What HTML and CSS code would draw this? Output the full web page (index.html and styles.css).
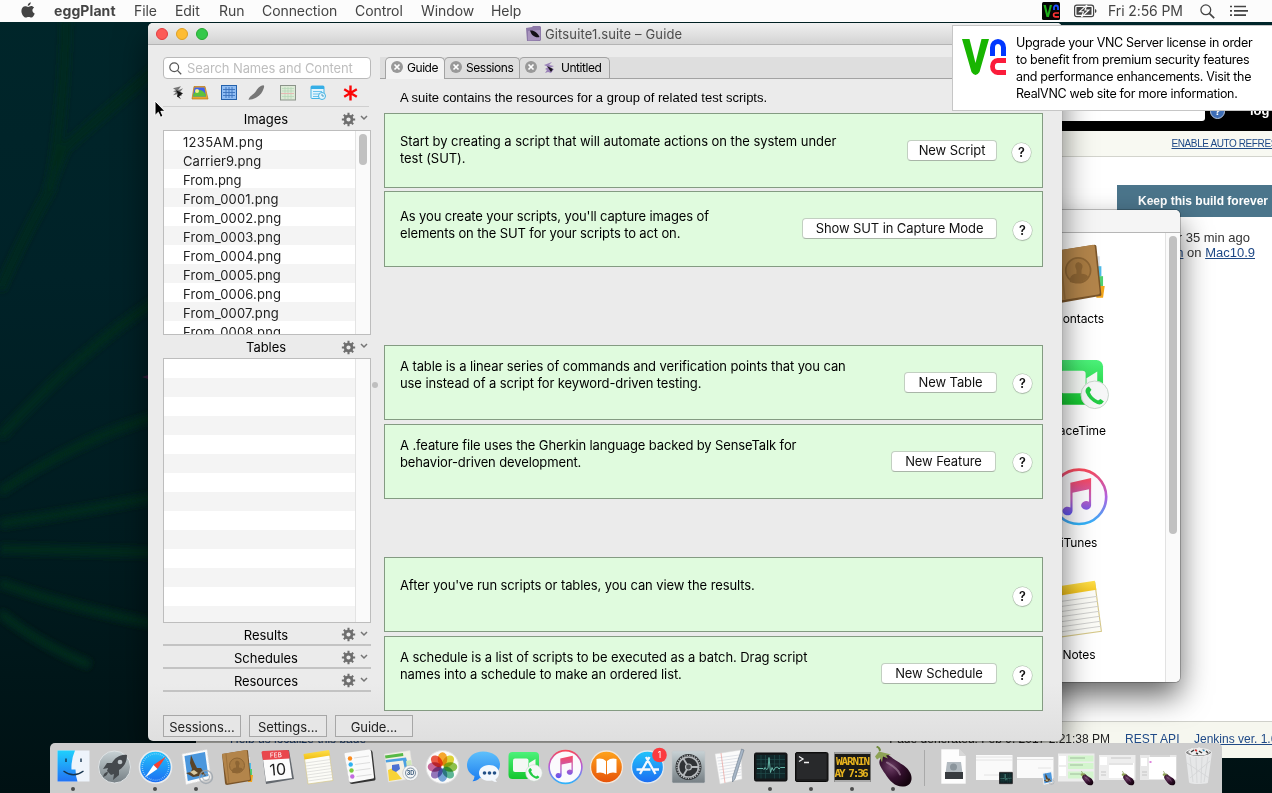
FILE: index.html
```html
<!DOCTYPE html>
<html lang="en">
<head>
<meta charset="utf-8">
<title>Gitsuite1.suite – Guide</title>
<link rel="stylesheet" href="styles.css">
</head>
<body>
<svg class="defs" aria-hidden="true">
  <defs>
    <linearGradient id="gBlue" x1="0" y1="0" x2="0" y2="1"><stop offset="0" stop-color="#5ec0fb"/><stop offset="1" stop-color="#1c7df0"/></linearGradient>
    <linearGradient id="gSky" x1="0" y1="0" x2="0" y2="1"><stop offset="0" stop-color="#22c5fb"/><stop offset="1" stop-color="#1c6cf2"/></linearGradient>
    <linearGradient id="gFinder" x1="0" y1="0" x2="0" y2="1"><stop offset="0" stop-color="#1fd0fd"/><stop offset="1" stop-color="#2272f4"/></linearGradient>
    <linearGradient id="gSilver" x1="0" y1="0" x2="0" y2="1"><stop offset="0" stop-color="#c8d2d5"/><stop offset="1" stop-color="#767f84"/></linearGradient>
    <linearGradient id="gGreen" x1="0" y1="0" x2="0" y2="1"><stop offset="0" stop-color="#4cf27a"/><stop offset="1" stop-color="#14c62e"/></linearGradient>
    <linearGradient id="gOrange" x1="0" y1="0" x2="0" y2="1"><stop offset="0" stop-color="#ffa41c"/><stop offset="1" stop-color="#e6520a"/></linearGradient>
    <linearGradient id="gRing" x1="0" y1="0" x2="0" y2="1"><stop offset="0" stop-color="#f84a5c"/><stop offset=".5" stop-color="#b060e0"/><stop offset="1" stop-color="#30b4fa"/></linearGradient>
    <linearGradient id="gNote" x1="0" y1="0" x2="0" y2="1"><stop offset="0" stop-color="#f9485e"/><stop offset=".55" stop-color="#c05fc0"/><stop offset="1" stop-color="#5a55f4"/></linearGradient>
    <linearGradient id="gYellow" x1="0" y1="0" x2="0" y2="1"><stop offset="0" stop-color="#ffe04a"/><stop offset="1" stop-color="#f0bd12"/></linearGradient>
    <radialGradient id="gEgg" cx=".35" cy=".4" r=".7"><stop offset="0" stop-color="#6d3f66"/><stop offset=".5" stop-color="#35102f"/><stop offset="1" stop-color="#16040f"/></radialGradient>
  </defs>
  <symbol id="gear" viewBox="0 0 16 16">
    <circle cx="8" cy="8" r="3.700" fill="none" stroke="#6e6e6e" stroke-width="2.900"/>
    <g stroke="#6e6e6e" stroke-width="2.200"><path d="M8 .9V3.500M8 12.500V15.100M.9 8H3.500M12.500 8H15.100M3 3l1.800 1.800M11.200 11.200L13 13M13 3l-1.800 1.800M4.800 11.200L3 13"/></g>
  </symbol>
  <symbol id="chev" viewBox="0 0 8 6"><path d="M1 1l3 3 3-3" fill="none" stroke="#757575" stroke-width="1.500"/></symbol>
  <symbol id="close" viewBox="0 0 12 12"><circle cx="6" cy="6" r="6" fill="#999"/><path d="M3.500 3.500l5 5M8.500 3.500l-5 5" stroke="#fff" stroke-width="1.700"/></symbol>
  <symbol id="egg" viewBox="0 0 41 50">
    <path d="M6 6c0-4-3-4-3-4l1-1.500c2 0 4 2.500 4 4.500z" fill="#6f8a3a"/>
    <path d="M7 14C5 18 8 22 12 28c5 8 11 14 19 13 8-1 9-9 6-14-3-6-8-8-14-12C18 12 13 6 10 9z" fill="url(#gEgg)"/>
    <path d="M2 11l4-5 4 1 8 2-5 1 2 3-5-2-1 6-2-5-3 2z" fill="#8ea355"/>
    <path d="M14 17c5 3 11 6 13 12" stroke="#a88aa2" stroke-width="2" fill="none" opacity=".65" stroke-linecap="round"/>
  </symbol>
  <symbol id="contacts" viewBox="0 0 41 50">
    <path d="M29 14h4v8h-4z" fill="#d9dde2"/><path d="M30 20h4v6h-4z" fill="#4ebbe9"/><path d="M30 26h5v7h-5z" fill="#4ed070"/><path d="M30 32h6l-1 7h-4z" fill="#f2a51a"/>
    <path d="M5 11L30 7q1 0 1 1l3 29q0 1-1 1L10 42q-2 0-2-2z" fill="#7a552a"/>
    <path d="M5 11L29 7q1 0 1 1l3 28q0 1-1 1L10 40.500z" fill="#b3854b"/>
    <circle cx="20" cy="22.500" r="7.500" fill="#a87b42" stroke="#8d6534"/><path d="M15 27.500q1-3 4-3v-2q-2-4 1-5 4 1 2 5v2q3 0 4 2-5 5-11 3z" fill="#8d6534"/><path d="M9 11l3 29" stroke="#9d723c"/>
  </symbol>
  <symbol id="facetime" viewBox="0 0 41 50">
    <rect x="4.500" y="9" width="30.500" height="27" rx="4" fill="url(#gGreen)"/><rect x="9" y="15.500" width="15.500" height="13.500" rx="2" fill="#f4f8f4"/><path d="M25 20l6.500-4v12l-6.500-4z" fill="#f4f8f4"/>
    <circle cx="30" cy="30" r="8.300" fill="#f6f7f7" stroke="#c9d6cc" stroke-width=".6"/><path d="M26.500 25l1.500 2-1 1.500q1.500 3.500 5 5l1.500-1 2 1.500q-1.500 2.500-4 1.500-5-2-7-7-.5-2.500 2-3.500z" fill="#22cc44"/>
  </symbol>
  <symbol id="itunes" viewBox="0 0 41 50">
    <circle cx="20.500" cy="24" r="16.400" fill="#fbfafd" stroke="url(#gRing)" stroke-width="1.600"/>
    <path d="M15.300 15.500l12.500-2.800v16.500a3 2.600 0 1 1-1.300-2.200v-7.600l-9.900 2.200v11a3 2.600 0 1 1-1.300-2.200z" fill="url(#gNote)"/>
  </symbol>
  <symbol id="notes" viewBox="0 0 41 50">
    <path d="M5 12l25-4 4 29.500L9 41z" fill="#fcfcf7" stroke="#d7c98a" stroke-width=".7"/><path d="M4.500 11L30 7l1 5.500-25.500 4z" fill="url(#gYellow)"/>
    <path d="M6.300 20l25-3.500M6.800 23l25-3.500M7.200 26l25-3.500M7.600 29l25-3.500M8 32l25-3.500M8.400 35l25-3.500M8.800 38l25-3.500" stroke="#d0d0ce" stroke-width=".6"/>
  </symbol>
  <symbol id="mail" viewBox="0 0 41 50">
    <path d="M6 11l25-4.500 4 29-25 6z" fill="#fbfbfb" stroke="#ddd" stroke-width=".8" stroke-dasharray="1.500 1"/><path d="M8.500 13l20.500-4 3.300 24-20.500 5z" fill="#4b97dd"/>
    <path d="M15 12l3 7 3 6 4 0 5 8-5-2-2 2-6 1-7-4 5-1 1-3-2-6z" fill="#5a4326"/><path d="M14 29l4-2 4 3-4 2z" fill="#d9c9a0"/><circle cx="30" cy="34" r="6.500" fill="none" stroke="#9aa3ab" stroke-width="1.400" opacity=".8"/><circle cx="30" cy="34" r="3.500" fill="none" stroke="#9aa3ab" opacity=".8"/>
  </symbol>
  <symbol id="monitor" viewBox="0 0 41 50">
    <rect x="4.500" y="10" width="32.500" height="28" rx="1.500" fill="#16191b" stroke="#0c0d0e"/><rect x="6.500" y="12" width="28.500" height="23.500" fill="#10272a"/>
    <path d="M6.500 16.500H35M6.500 21H35M6.500 30.500H35M11 12v23.500M15.500 12v23.500M24.500 12v23.500M29.500 12v23.500" stroke="#24514f" stroke-width=".6"/>
    <path d="M7 25.500h6l1 1 1-2 1.500 2 1.500-1 1-11 1.500 15 1.500-5 1.500 3 2-3 2-.5 1.500 2 1.500-1.500H35" fill="none" stroke="#6fc2b2" stroke-width=".9"/>
  </symbol>
</svg>

<div class="desktop">
  <svg class="leaf" viewBox="0 0 200 793" aria-hidden="true">
    <defs><filter id="soft"><feGaussianBlur stdDeviation="3"/></filter></defs>
    <g fill="none" stroke="#042c1d" stroke-width="9" filter="url(#soft)">
      <path d="M66 20Q64 110 50 190Q24 235 0 290" opacity=".8"/><path d="M160 65L65 148L48 190" opacity=".8"/>
      <path d="M160 298Q80 350 0 437"/><path d="M160 415Q80 438 0 492"/><path d="M160 496Q80 512 0 524"/><path d="M160 553L0 549"/><path d="M160 625Q70 608 0 583"/><path d="M90 665Q40 645 0 613"/>
    </g>
    <path d="M142 377l6-2v4z" fill="#4a1a46" opacity=".7"/>
  </svg>

  <section class="jenkins">
    <div class="jk-head"><span class="jk-search"></span><span class="jk-help">?</span><b class="jk-log">log in</b></div>
    <div class="jk-refresh"><a>ENABLE AUTO REFRESH</a></div>
    <div class="jk-body">
      <div class="jk-keep">Keep this build forever</div>
      <div class="jk-info"><div class="jk-when">Started 1 hr 35 min ago</div><div>Took <a>2 min</a> on <a>Mac10.9</a></div></div>
    </div>
    <div class="jk-foot"><a class="jk-loc">Help us localize this page</a><span class="jk-gen">Page generated: Feb 9, 2017 2:21:38 PM</span><a class="jk-rest">REST API</a><a class="jk-ver">Jenkins ver. 1.643</a></div>
  </section>

  <section class="apps">
    <div class="apps-title"></div>
    <div class="apps-body">
      <div class="apps-list">
        <figure><svg viewBox="0 0 41 50"><use href="#contacts"/></svg><figcaption>Contacts</figcaption></figure>
        <figure><svg viewBox="0 0 41 50"><use href="#facetime"/></svg><figcaption>FaceTime</figcaption></figure>
        <figure><svg viewBox="0 0 41 50"><use href="#itunes"/></svg><figcaption>iTunes</figcaption></figure>
        <figure><svg viewBox="0 0 41 50"><use href="#notes"/></svg><figcaption>Notes</figcaption></figure>
      </div>
      <div class="apps-track"><div class="apps-thumb"></div></div>
    </div>
  </section>

  <section class="suite">
    <header class="titlebar">
      <div class="lights"><i class="red"></i><i class="amber"></i><i class="green"></i></div>
      <div class="title"><svg width="15" height="15" viewBox="0 0 15 15"><path d="M0 2l6-1 1-1h7l1 1v13l-1 1H1z" fill="#8d79a8"/><path d="M2 5l12-1v10l-12 .5z" fill="#a995be"/><path d="M4 4.500c4-.5 7.500 2 9.500 6.500-4 1-8-1-9.500-6.500z" fill="#141016"/></svg><span>Gitsuite1.suite – Guide</span></div>
    </header>
    <div class="columns">
      <aside class="sidebar">
        <div class="search"><svg width="13" height="13" viewBox="0 0 13 13"><circle cx="5.200" cy="5.200" r="4.400" fill="none" stroke="#555" stroke-width="1.200"/><path d="M8.400 8.400l3.800 3.800" stroke="#555" stroke-width="1.300"/></svg><span>Search Names and Content</span></div>
        <svg class="tools" viewBox="0 0 206 27">
          <g transform="translate(0 .3)"><path d="M10 9l8-2-3 4 5-2-3 4 2 3-5 2 0-3-4 1 3-3-3-1 3-1z" fill="#777"/><path d="M13 11l7 3-4 3 2 3-4-3 1-2z" fill="#151515"/></g>
          <path d="M31 7.500h11l3 12.500H29z" fill="#e9a52c" stroke="#b97914" stroke-width=".7"/><path d="M31.500 8.500h10l1.500 9h-13z" fill="#3f62ee"/><path d="M30.500 15q6-8 12 0l.5 2.500H30z" fill="#5cc23c"/><circle cx="34" cy="12" r="2" fill="#f4ee8c"/>
          <rect x="58.500" y="6.500" width="15" height="14" fill="#8fbcf2" stroke="#2461ab"/><path d="M60 10.500h12M60 13.500h12M60 16.500h12M63 8v11M66 8v11M69 8v11" stroke="#3a72bc" stroke-width=".9"/>
          <path d="M85.500 20.800c1-4 5-5 7-8 2-3 4-6 8-6.500 1.500 1 0 3.500-1 6-2 4.500-8 8.500-14 8.500z" fill="#777"/>
          <rect x="117.500" y="6.500" width="15" height="14.500" fill="#dcead6" stroke="#8b938a"/><path d="M119 9.500h12M119 12h12M119 17.500h12M122 8v12M125 8v12M128 8v12" stroke="#b2d6b4" stroke-width=".7"/><path d="M118 14.500h13" stroke="#e7b9b4"/>
          <rect x="148" y="7" width="13" height="12.500" rx="1" fill="#e2f4fd" stroke="#42b3e6"/><path d="M148 7h13v3h-13z" fill="#35aee6"/><path d="M150 12.500h9M150 15h7M150 17.500h6" stroke="#6cc2ec"/><circle cx="159" cy="17" r="3.500" fill="#e5f6fe" stroke="#45b4e4"/><path d="M159 15v2h2" fill="none" stroke="#2c8ab7" stroke-width=".8"/>
          <path d="M187.500 6.500v15M181.200 10.300l12.600 7.400M193.800 10.300l-12.600 7.400" stroke="#fb0707" stroke-width="2.400"/>
        </svg>
        <div class="head"><span>Images</span><svg class="gear"><use href="#gear"/></svg><svg class="chev"><use href="#chev"/></svg></div>
        <div class="list images"><ul><li>1235AM.png</li><li>Carrier9.png</li><li>From.png</li><li>From_0001.png</li><li>From_0002.png</li><li>From_0003.png</li><li>From_0004.png</li><li>From_0005.png</li><li>From_0006.png</li><li>From_0007.png</li><li>From_0008.png</li></ul><div class="track"><div class="thumb"></div></div></div>
        <div class="head"><span>Tables</span><svg class="gear"><use href="#gear"/></svg><svg class="chev"><use href="#chev"/></svg></div>
        <div class="list tables"><ul><li></li><li></li><li></li><li></li><li></li><li></li><li></li><li></li><li></li><li></li><li></li><li></li><li></li><li></li></ul><div class="track"></div></div>
        <div class="head ruled"><span>Results</span><svg class="gear"><use href="#gear"/></svg><svg class="chev"><use href="#chev"/></svg></div>
        <div class="head ruled"><span>Schedules</span><svg class="gear"><use href="#gear"/></svg><svg class="chev"><use href="#chev"/></svg></div>
        <div class="head ruled"><span>Resources</span><svg class="gear"><use href="#gear"/></svg><svg class="chev"><use href="#chev"/></svg></div>
        <div class="foot"><button>Sessions...</button><button>Settings...</button><button>Guide...</button></div>
      </aside>
      <div class="splitter"><i></i></div>
      <main class="content">
        <nav class="tabs">
          <div class="tab on"><svg class="x"><use href="#close"/></svg><span>Guide</span></div>
          <div class="tab two"><svg class="x"><use href="#close"/></svg><span>Sessions</span></div>
          <div class="tab three"><svg class="x"><use href="#close"/></svg><svg class="mini" viewBox="0 0 12 13"><path d="M1 4l8-3-3 3 5 1-4 2 4 1-3 4-3-1-3 1 2-3-2-1 3-2z" fill="#9a82b8"/><path d="M4 5l6 3-2 3-2-3z" fill="#18131c"/></svg><span>Untitled</span></div>
        </nav>
        <p class="intro">A suite contains the resources for a group of related test scripts.</p>
        <div class="cards">
          <article class="card c1"><p>Start by creating a script that will automate actions on the system under<br>test (SUT).</p><button class="w90">New Script</button><b class="q">?</b></article>
          <article class="card c2"><p>As you create your scripts, you'll capture images of<br>elements on the SUT for your scripts to act on.</p><button class="w195">Show SUT in Capture Mode</button><b class="q">?</b></article>
          <article class="card c3"><p>A table is a linear series of commands and verification points that you can<br>use instead of a script for keyword-driven testing.</p><button class="w93">New Table</button><b class="q">?</b></article>
          <article class="card c4"><p>A .feature file uses the Gherkin language backed by SenseTalk for<br>behavior-driven development.</p><button class="w105">New Feature</button><b class="q">?</b></article>
          <article class="card c5"><p>After you've run scripts or tables, you can view the results.</p><b class="q">?</b></article>
          <article class="card c6"><p>A schedule is a list of scripts to be executed as a batch. Drag script<br>names into a schedule to make an ordered list.</p><button class="w116">New Schedule</button><b class="q">?</b></article>
        </div>
      </main>
    </div>
  </section>

  <header class="menubar">
    <svg class="apple" width="14" height="17" viewBox="0 0 14 17"><path d="M9.800.3c.1 1.800-1.300 3.500-3 3.600C6.500 2.200 8.200.5 9.800.3zM7.200 4.900c.8 0 1.700-.9 3-.9 1 0 2.200.5 2.900 1.600-2.500 1.500-2.100 5 .6 6-.6 1.900-2 4-3.300 4-1.100 0-1.500-.7-2.800-.7s-1.800.7-2.800.7C2.800 15.600.4 11.900.4 8.900.4 5.900 2.300 4.200 4.200 4.200c1.200 0 2.100.7 3 .7z" fill="#444"/></svg>
    <nav class="menus"><b>eggPlant</b><span>File</span><span>Edit</span><span>Run</span><span>Connection</span><span>Control</span><span>Window</span><span>Help</span></nav>
    <svg class="vnc-mini" width="18" height="18" viewBox="0 0 18 18"><rect width="18" height="18" rx="1.500" fill="#050505"/><path d="M1.500 3h2.300l2 8.500 2-8.500H10L6.900 15H4.500z" fill="#1fae1a"/><path d="M12 8V5.500a1.500 1.500 0 0 1 4 0V8" fill="none" stroke="#1c50ff" stroke-width="1.800"/><path d="M17 11h-3.500a1.800 1.800 0 0 0 0 3.800H17" fill="none" stroke="#f33" stroke-width="1.700"/></svg>
    <svg class="battery" width="23" height="14" viewBox="0 0 23 14"><rect x=".6" y="1.100" width="19" height="11.600" rx="2.200" fill="none" stroke="#444" stroke-width="1.200"/><rect x="2.500" y="3" width="15" height="7.800" rx=".5" fill="#444"/><path d="M21 5v4q1.500-.5 1.500-2T21 5z" fill="#444"/><path d="M13 1L5.500 7.700h4L7.500 13l7.500-7h-4z" fill="#444" stroke="#fcfcfc" stroke-width="1.100"/></svg>
    <span class="clock">Fri 2:56 PM</span>
    <svg class="lens" width="15" height="15" viewBox="0 0 15 15"><circle cx="5.800" cy="5.800" r="4.900" fill="none" stroke="#444" stroke-width="1.300"/><path d="M9.300 9.300l4.900 4.900" stroke="#444" stroke-width="1.700"/></svg>
    <svg class="lines" width="18" height="12" viewBox="0 0 18 12"><path d="M0 1.500h2M0 5.800h2M0 10.200h2M4 1.500h12M4 5.800h14M4 10.200h12" stroke="#444" stroke-width="1.700"/></svg>
  </header>

  <aside class="popup">
    <svg width="44" height="37" viewBox="0 0 44 37"><path d="M0 0h7.500L13.500 24 19.500 0H27L17.500 33q-4 6-8 0z" fill="#18b500"/><path d="M30.500 17V8.500a5.500 6 0 0 1 11 0V17" fill="none" stroke="#0037ff" stroke-width="5"/><path d="M44 21.500H35.500a5 6 0 0 0 0 12H44" fill="none" stroke="#fb1c3b" stroke-width="4.800"/></svg>
    <p>Upgrade your VNC Server license in order<br>to benefit from premium security features<br>and performance enhancements. Visit the<br>RealVNC web site for more information.</p>
  </aside>

  <footer class="dock">
    <div class="dk run"><svg viewBox="0 0 41 50"><rect x="4.500" y="7.500" width="32" height="31" fill="#eef4fb"/><path d="M4.500 7.500H22q-4 9-3.500 19h4q0 6 2 12h-20z" fill="url(#gFinder)"/><path d="M13 15.500v3.500M28 15.500v3.500" stroke="#16344e" stroke-width="1.400"/><path d="M10.500 28q10 7.500 20 0" fill="none" stroke="#16344e" stroke-width="1.300"/></svg></div>
    <div class="dk"><svg viewBox="0 0 41 50"><circle cx="20.500" cy="24" r="16" fill="url(#gSilver)" stroke="#dfe3e5"/><path d="M33 12c-7-1-12 3-15 8h-5l-4 6 5-1-1 3 4 4 3-1-1 6 6-5v-5c5-3 8-8 8-15z" fill="#45494d"/><circle cx="26" cy="19" r="2.300" fill="#bcc3c7"/><path d="M9 34q1-5 5-5-.5 4-5 5z" fill="#45494d"/></svg></div>
    <div class="dk run"><svg viewBox="0 0 41 50"><circle cx="20.500" cy="24" r="16" fill="url(#gSky)" stroke="#e9ecef" stroke-width="1.600"/><circle cx="20.500" cy="24" r="13.200" fill="none" stroke="#9cd3fb" stroke-width="1.500" stroke-dasharray=".7 1.370"/><path d="M31 13.500L18.500 22l4 4z" fill="#f8402f"/><path d="M10 34.500L18.500 22l4 4z" fill="#fff"/></svg></div>
    <div class="dk run"><svg viewBox="0 0 41 50"><use href="#mail"/></svg></div>
    <div class="dk"><svg viewBox="0 0 41 50"><use href="#contacts"/></svg></div>
    <div class="dk"><svg viewBox="0 0 41 50"><path d="M4 10l27-3 5 29-28 5z" fill="#64696f"/><path d="M5 16l26-2 3 21-26 3.500z" fill="#fcfcfc"/><path d="M3.500 9.500Q3.500 8 5 8l24-1q1.500 0 2 1.500l.7 7L5 17z" fill="#e9474c"/><text x="18" y="14.300" font-size="6.500" fill="#fff" text-anchor="middle" transform="rotate(-3 18 14)">FEB</text><text x="20" y="32" font-size="16" fill="#222" text-anchor="middle" transform="rotate(-5 20 28)">10</text></svg></div>
    <div class="dk"><svg viewBox="0 0 41 50"><use href="#notes"/></svg></div>
    <div class="dk"><svg viewBox="0 0 41 50"><path d="M5 11l25-4q2 0 2.500 2l3 27q0 1-1 1.500L12 41q-2 0-2.500-2z" fill="#333"/><path d="M4.500 11q0-1 1-1L29 6.500q1.500 0 2 1.500l3 26q0 1.500-1 1.500L11 39.500q-2 0-2-1.500z" fill="#fafafa"/><path d="M14 15l15-2M15 21.500l15-2M15.500 27.500l15-2M16.500 33.500l15-2" stroke="#ddd"/><circle cx="10" cy="15.500" r="2.200" fill="#fb8b1d"/><circle cx="10.700" cy="21.500" r="2.200" fill="#2fb1f1"/><circle cx="11.500" cy="27.500" r="2.200" fill="#7acb3e"/><circle cx="12.300" cy="33.500" r="2.200" fill="#c36ae0"/></svg></div>
    <div class="dk"><svg viewBox="0 0 41 50"><path d="M3.500 11L29 7.500l4 28L7.500 39z" fill="#f3f0e5" stroke="#ddd" stroke-width=".6"/><path d="M4 12.500L22 10l.4 3L4.500 15.500z" fill="#57b947"/><path d="M4.700 17L25 14.500q3 10 4 20h-4q-1-9-3-17L5 19.500z" fill="#4ba0e2"/><path d="M7 27l5-2 9 11-13 2z" fill="#f8d337"/><path d="M25 18l5-1 2 13-5 2z" fill="#cfe8b8"/><path d="M11 22l7-1 1 5-4 3-4-2z" fill="#4d71d2"/><circle cx="29.500" cy="30" r="7.800" fill="#f3f5f6" stroke="#bbb" stroke-width=".6"/><circle cx="29.500" cy="30" r="5" fill="none" stroke="#5b7085" stroke-width=".8"/><text x="29.500" y="32" font-size="5.500" font-weight="700" fill="#357" text-anchor="middle">3D</text></svg></div>
    <div class="dk"><svg viewBox="0 0 41 50"><circle cx="20.500" cy="24" r="16.500" fill="#fafafa" stroke="#ddd"/><g class="petals" transform="translate(20.500 24)"><ellipse cy="-8" rx="4.800" ry="6.800" fill="#fba31b"/><ellipse cy="-8" rx="4.800" ry="6.800" fill="#e0d424" transform="rotate(45)"/><ellipse cy="-8" rx="4.800" ry="6.800" fill="#86bf3c" transform="rotate(90)"/><ellipse cy="-8" rx="4.800" ry="6.800" fill="#51b48f" transform="rotate(135)"/><ellipse cy="-8" rx="4.800" ry="6.800" fill="#6b9fd8" transform="rotate(180)"/><ellipse cy="-8" rx="4.800" ry="6.800" fill="#8d6bb8" transform="rotate(225)"/><ellipse cy="-8" rx="4.800" ry="6.800" fill="#c45a93" transform="rotate(270)"/><ellipse cy="-8" rx="4.800" ry="6.800" fill="#ee4d36" transform="rotate(315)"/></g></svg></div>
    <div class="dk"><svg viewBox="0 0 41 50"><path d="M20 8.500c10 0 17 5.500 17 13s-7 13.500-17 13.500q-1.500 0-3-.2-3 3.500-7.500 3.400 2-2.200 2-5.200C6.500 31 4 26.500 4 22c0-7.500 7-13.500 16-13.500z" fill="url(#gBlue)"/><path d="M26 22c6 0 10 3.500 10 8 0 3-1.500 5-3.500 6.300q.2 1.500 1.500 2.700-3 0-5-1.500-1.500.3-3 .3c-6 0-10-3.500-10-7.800s4-8 10-8z" fill="#f3f8fd"/><circle cx="21.500" cy="30" r="1.800" fill="#245187"/><circle cx="26.500" cy="30" r="1.800" fill="#245187"/><circle cx="31.500" cy="30" r="1.800" fill="#245187"/></svg></div>
    <div class="dk"><svg viewBox="0 0 41 50"><use href="#facetime"/></svg></div>
    <div class="dk"><svg viewBox="0 0 41 50"><use href="#itunes"/></svg></div>
    <div class="dk"><svg viewBox="0 0 41 50"><circle cx="20.500" cy="24" r="16" fill="url(#gOrange)" stroke="#f1e7dd" stroke-width="1.300"/><path d="M20 18q-4-3.500-9.500-2v14q5.500-1.500 9.500 1.500zM21 18q4-3.500 9.500-2v14q-5.500-1.500-9.500 1.500z" fill="#fff"/></svg></div>
    <div class="dk"><svg viewBox="0 0 41 50"><circle cx="20.500" cy="24" r="16" fill="url(#gSky)" stroke="#e2e9ef" stroke-width="1.300"/><path d="M19 14l9.500 17M22.500 14L13 31M9.500 26.500h14M26 26.500h6" stroke="#f4f8fd" stroke-width="2.300" fill="none"/><circle cx="32.500" cy="12" r="7.300" fill="#fb3b3f"/><text x="32.500" y="15" font-size="8.500" fill="#fff" text-anchor="middle">1</text></svg></div>
    <div class="dk"><svg viewBox="0 0 41 50"><rect x="4" y="8" width="33" height="32" rx="1.500" fill="url(#gSilver)" stroke="#c2c7ca" stroke-width=".6"/><circle cx="20.500" cy="24" r="13" fill="#303336"/><circle cx="20.500" cy="24" r="10" fill="none" stroke="#b6babd" stroke-width="1.700"/><circle cx="20.500" cy="24" r="11.600" fill="none" stroke="#b6babd" stroke-width="1.300" stroke-dasharray="1.200 1.300"/><path d="M20.500 24L15 15M20.500 24H31M20.500 24L15 33" stroke="#b6babd" stroke-width="1.800"/><circle cx="20.500" cy="24" r="3" fill="#4b4e51" stroke="#b6babd" stroke-width="1.200"/></svg></div>
    <div class="dk"><svg viewBox="0 0 41 50"><path d="M6 11l26-4 1 29-22 5z" fill="#fbfbfb" stroke="#ddd" stroke-width=".5"/><path d="M8 15l22-3M8.500 18l22-3M9 21l22-3M9.500 24l22-3.500M10 27l22-3.500M10.500 30l22-3.500M11 33l21-4M11.500 36l21-4" stroke="#cdd2da" stroke-width=".6"/><path d="M12 10l4 30" stroke="#eba8a4" stroke-width=".8"/><path d="M32.500 6l2.500 1-9 29-2.500 3v-4.500z" fill="#a7b6c7" stroke="#5d6c7d" stroke-width=".5"/></svg></div>
    <div class="dk run"><svg viewBox="0 0 41 50"><use href="#monitor"/></svg></div>
    <div class="dk run"><svg viewBox="0 0 41 50"><rect x="4.500" y="9.500" width="32.500" height="29" rx="1.500" fill="#1c1c1d" stroke="#0c0c0c"/><rect x="6" y="11" width="29.500" height="25" fill="#28292b"/><path d="M8 13.500l4 2.500-4 2.500M13 19.500h5" fill="none" stroke="#f2f2f2" stroke-width="1.300"/></svg></div>
    <div class="dk run"><svg viewBox="0 0 41 50"><rect x="2.500" y="9" width="36" height="30" fill="#1b1a16"/><path d="M2.500 10h36" stroke="#c9c9c9" stroke-width="1.500"/><path d="M2.500 38h36" stroke="#aaa" stroke-width="2"/><g class="led"><text x="4" y="21.500" textLength="34">WARNIN</text><text x="2.500" y="34" textLength="34">AY 7:36</text></g></svg></div>
    <div class="dk run"><svg viewBox="0 0 41 50"><use href="#egg" transform="translate(0 2.500)" width="41" height="50"/></svg></div>
    <div class="sep"></div>
    <div class="dk"><svg viewBox="0 0 41 50"><path d="M8 6h18l7 7v28H8z" fill="#fdfdfd" stroke="#ccc" stroke-width=".6"/><path d="M26 6v7h7z" fill="#d8d8d8"/><path d="M14 19h14l2 15H12z" fill="#b2bac0"/><path d="M12 29h18v7H12z" fill="#373b3f"/><circle cx="20.500" cy="24" r="3.500" fill="#8b959c"/></svg></div>
    <div class="dk"><svg viewBox="0 0 41 50"><rect x="2" y="12" width="36.500" height="25" fill="#fafafa"/><path d="M2 14h36.500M2 17h36.500M10 32h20" stroke="#ddd" stroke-width=".8"/><svg x="25" y="28" width="14" height="14" viewBox="4 9 34 30"><use href="#monitor" width="41" height="50"/></svg></svg></div>
    <div class="dk"><svg viewBox="0 0 41 50"><rect x="2" y="14" width="36.500" height="21" fill="#fafafa"/><path d="M2 16.500h36.500M23 25h13" stroke="#ddd" stroke-width=".8"/><svg x="26" y="28" width="14" height="14" viewBox="4 6 34 36"><use href="#mail" width="41" height="50"/></svg></svg></div>
    <div class="dk"><svg viewBox="0 0 41 50"><rect x="2" y="10.500" width="36.500" height="28" fill="#ededed"/><path d="M3 13h7v9H3zM3 24h7v9H3z" fill="#fff"/><path d="M12 12.500h25.500v6H12zM12 20h25.500v6H12zM12 28.500h25.500v7H12z" fill="#d3f5cd"/><path d="M14 15h15M14 22h13M14 31h15" stroke="#96af90" stroke-width=".8"/><svg x="23" y="28" width="16" height="15" viewBox="0 0 41 43"><use href="#egg" width="41" height="50"/></svg></svg></div>
    <div class="dk"><svg viewBox="0 0 41 50"><rect x="2" y="12" width="36.500" height="25" fill="#eee"/><path d="M3 14h7v8H3zM12 20h25v15H12z" fill="#fff"/><path d="M12 21h24M14 15h20M4 29h5M4 32h5" stroke="#bbb" stroke-width=".8"/><svg x="23" y="28" width="16" height="15" viewBox="0 0 41 43"><use href="#egg" width="41" height="50"/></svg></svg></div>
    <div class="dk"><svg viewBox="0 0 41 50"><rect x="2" y="12" width="36.500" height="25" fill="#e8e8e8"/><path d="M11 14h27v22H11zM3 15h6v8H3z" fill="#fff"/><path d="M4 29h5M4 32h5M12 13h20" stroke="#bbb" stroke-width=".8"/><path d="M11.500 19h2" stroke="#d35fd0" stroke-width="1.500"/><svg x="23" y="28" width="16" height="15" viewBox="0 0 41 43"><use href="#egg" width="41" height="50"/></svg></svg></div>
    <div class="dk"><svg viewBox="0 0 41 50"><path d="M6.500 9L10 39q0 2 10 2t9-2l4-30z" fill="#e6e7e8"/><ellipse cx="19.500" cy="9.500" rx="13" ry="4" fill="#8c8c8c" stroke="#f4f4f4"/><path d="M9 9l4-4 4 2 3-3 4 3 4-1 3 3-5 3H13z" fill="#eee"/><path d="M12 9l3-2M20 8l3 2M27 8l2 2M17 10l2 1" stroke="#333" stroke-width="1.500"/><path d="M16 7l2 1" stroke="#d33" stroke-width="1.500"/><path d="M24 7l1.500 1" stroke="#39c" stroke-width="1.500"/><path d="M11 14l3 25M17 14l1 26M23 14l-1 26M29 14l-4 25M8 20l22 15M31 18L11 35" stroke="#d3d4d6" stroke-width=".8"/></svg></div>
  </footer>

  <svg class="cursor" width="12" height="19" viewBox="0 0 12 19"><path d="M1 1v14.500l3.300-3.200 2.200 5 2.500-1.100-2.200-4.900H11z" fill="#000" stroke="#fff" stroke-width="1"/></svg>
</div>
</body>
</html>
```
FILE: styles.css
```css
* { box-sizing: border-box; }
body { margin: 0; font-family: Inter, "Liberation Sans", sans-serif; font-size: 13px; color: #111; overflow: hidden; }
p, ul, figure { margin: 0; padding: 0; }
button { font: inherit; color: #111; padding: 0; white-space: nowrap; }
.defs { position: absolute; width: 0; height: 0; }
.desktop { position: relative; width: 1272px; height: 793px; overflow: hidden; background: linear-gradient(180deg, #00262a 0, #002228 35%, #001b1f 70%, #001113 100%); }
.leaf { position: absolute; left: 0; top: 0; width: 200px; height: 793px; }

/* menu bar */
.menubar { position: absolute; left: 0; top: 0; width: 1272px; height: 22px; background: #fcfcfc; display: flex; align-items: center; padding-left: 21px; font-size: 14px; color: #444; }
.apple { margin-top: -2px; flex: none; }
.menus { margin: 0 0 1px 19px; display: grid; grid-template-columns: 80px 41px 44px 43px 93px 66px 70px 60px; white-space: nowrap; }
.menus span { letter-spacing: -.08px; }
.menus b { letter-spacing: .1px; }
.vnc-mini { margin-left: auto; }
.battery { margin-left: 14px; }
.clock { margin: 0 0 1px 11px; width: 76px; white-space: nowrap; letter-spacing: -.1px; }
.lens { margin-left: 16px; }
.lines { margin: 0 24px 0 15px; }

/* notification */
.popup { position: absolute; left: 952px; top: 25px; width: 321px; height: 86px; background: #fff; border: 1px solid #c6c6c6; padding: 8px 0 0 9px; display: flex; gap: 10px; font-size: 12.500px; line-height: 17px; color: #000; }
.popup svg { margin-top: 5px; flex: none; }
.popup p { white-space: nowrap; letter-spacing: -.31px; }

/* web page behind */
.jenkins { position: absolute; left: 196px; top: 60px; width: 1076px; height: 698px; background: #fff; display: flex; flex-direction: column; font-family: "Liberation Sans", sans-serif; }
.jenkins a { color: #204a87; text-decoration: underline; }
.jk-head { height: 71px; background: #000; display: flex; align-items: flex-end; justify-content: flex-end; color: #fff; }
.jk-search { width: 160px; height: 22px; background: #fff; border-radius: 3px; margin: 0 5px 10px 0; }
.jk-help { width: 15px; height: 15px; border-radius: 50%; background: #3e6db5; border: 1px solid #b9c9e2; font: bold 11px/13px "Liberation Sans", sans-serif; text-align: center; margin: 0 25px 12px 0; }
.jk-log { width: 22px; white-space: nowrap; font-size: 13px; line-height: 15px; margin-bottom: 13px; }
.jk-refresh { height: 26px; background: #f8f9f2; border-bottom: 1px solid #d3d4cd; font-size: 10px; line-height: 26px; padding-left: 975.500px; white-space: nowrap; letter-spacing: -.4px; }
.jk-body { flex: 1; display: flex; flex-direction: column; }
.jk-keep { margin: 28px 0 0 921px; height: 32px; background: #4b758b; color: #fff; font-weight: bold; font-size: 12px; line-height: 32px; padding-left: 21px; white-space: nowrap; }
.jk-info { margin: 13px 17px 0 0; text-align: right; font-size: 13px; line-height: 15px; color: #333; }
.jk-when { padding-right: 5px; }
.jk-foot { height: 37px; border-top: 1px solid #cfd0ca; background: #f6f7ef; font-size: 12px; line-height: 34px; display: flex; white-space: nowrap; color: #222; }
.jk-foot > * { flex: none; }
.jk-loc { width: 608px; padding-left: 34px; }
.jk-gen { width: 306px; text-align: right; }
.jenkins .jk-rest { margin-left: 15px; text-decoration: none; width: 69px; letter-spacing: .1px; }

/* Applications window */
.apps { position: absolute; left: 700px; top: 210px; width: 480px; height: 472px; border-radius: 5px; box-shadow: 0 0 0 1px rgba(0,0,0,.22), 0 14px 30px rgba(0,0,0,.6); background: #fff; display: flex; flex-direction: column; }
.apps-title { height: 23px; background: #f5f5f5; border-bottom: 1px solid #b6b6b6; border-radius: 5px 5px 0 0; }
.apps-body { flex: 1; display: flex; }
.apps-list { flex: 1; padding-left: 294px; }
.apps-list figure { width: 170px; height: 112px; display: flex; flex-direction: column; align-items: center; }
.apps-list svg { width: 68px; height: 83px; flex: none; margin-bottom: -5px; }
.apps-list figcaption { font-size: 12px; line-height: 16px; letter-spacing: -.1px; color: #000; }
.apps-track { width: 15px; border-left: 1px solid #e2e2e2; background: #fafafa; padding: 3px 0 0 3px; border-radius: 0 0 5px 0; }
.apps-thumb { width: 8px; height: 298px; border-radius: 4px; background: #c1c1c1; }

/* suite window */
.suite { position: absolute; left: 148px; top: 23px; width: 914px; height: 718px; background: linear-gradient(#ebebeb 0, #ebebeb 92%, #dfdfdf 100%); border-radius: 5px; box-shadow: 0 0 1px rgba(0,0,0,.5), 0 14px 32px rgba(0,0,0,.55); display: flex; flex-direction: column; }
.titlebar { height: 22px; border-bottom: 1px solid #b4b4b4; border-radius: 5px 5px 0 0; background: linear-gradient(#f0f0f0 0, #d3d3d3 100%); display: flex; align-items: center; padding-left: 8px; }
.lights { display: flex; gap: 8px; }
.lights i { width: 12px; height: 12px; border-radius: 50%; border: 1px solid #e33e41; background: #fc5b57; }
.lights .amber { border-color: #dfa023; background: #fdbc33; }
.lights .green { border-color: #27a831; background: #34c84a; }
.title { display: flex; align-items: center; gap: 4px; margin-left: 318px; color: #4c4c4c; white-space: nowrap; letter-spacing: .13px; }
.columns { flex: 1; display: flex; }
.sidebar { width: 208px; margin: 12px 0 0 15px; display: flex; flex-direction: column; }
.search { height: 22px; border: 1px solid #bababa; border-radius: 4px; background: #fff; display: flex; align-items: center; gap: 5px; padding-left: 5px; color: #bebebe; white-space: nowrap; flex: none; letter-spacing: -.12px; }
.tools { height: 28px; flex: none; border-bottom: 1px solid #cfcfcf; width: 206px; display: block; }
.head { height: 23px; display: grid; grid-template-columns: 1fr 16px 8px; column-gap: 3px; align-items: center; padding: 1px 3px 0 31px; flex: none; color: #000; }
.head span { text-align: center; letter-spacing: -.05px; }
.gear { width: 15px; height: 15px; }
.chev { width: 8px; height: 6px; margin-top: -2px; }
.head.ruled { border-bottom: 2px solid #c3c3c3; padding-top: 2px; }
.list { border: 1px solid #bdbdbd; background: #fff; display: flex; overflow: hidden; flex: none; }
.images { height: 205px; }
.tables { height: 265px; }
.list ul { flex: 1; list-style: none; }
.list li { height: 19px; line-height: 22px; padding-left: 19px; color: #222; letter-spacing: .15px; }
.list li:nth-child(1) { letter-spacing: .3px; }
.list li:nth-child(2) { letter-spacing: .05px; }
.list li:nth-child(3) { letter-spacing: 0; }
.list li:nth-child(even) { background: #f4f4f4; }
.track { width: 15px; border-left: 1px solid #e3e3e3; background: #fafafa; padding: 3px 0 0 3px; }
.thumb { width: 8px; height: 31px; border-radius: 4px; background: #c1c1c1; }
.foot { display: flex; gap: 8px; margin-top: 23px; width: 260px; }
.foot button { width: 78px; height: 22px; border: 1px solid #a7a7a7; background: #e6e6e6; flex: none; color: #222; letter-spacing: -.1px; padding-top: 1px; }
.splitter { width: 9px; padding: 337px 0 0 1px; }
.splitter i { display: block; width: 6px; height: 6px; border-radius: 50%; background: #bfbfbf; }
.content { flex: 1; margin-top: 12px; }
.tabs { height: 22px; margin-right: 19px; background: #dedede; border-bottom: 1px solid #a3a3a3; display: flex; padding-left: 5px; }
.tab { height: 21px; border: 1px solid #a3a3a3; border-bottom: 0; border-radius: 5px 5px 0 0; display: flex; align-items: center; gap: 4px; padding: 0 0 2px 5px; font-size: 12px; letter-spacing: -.45px; color: #000; background: #dedede; white-space: nowrap; }
.tab.on { background: #f3f3f3; width: 60px; height: 22px; padding-bottom: 3px; }
.tab.two { width: 76px; margin-left: -1px; }
.tab.three { width: 91px; margin-left: -1px; }
.x { width: 12px; height: 12px; flex: none; }
.mini { width: 12px; height: 13px; margin: 0 2px; flex: none; }
.intro { height: 34px; padding: 10px 0 0 20px; line-height: 17px; font-family: "Liberation Sans", sans-serif; font-size: 13px; color: #000; white-space: nowrap; }
.cards { margin-left: 4px; width: 659px; }
.card { height: 75px; border: 1px solid #849b82; background: #e0fbde; display: flex; align-items: flex-start; padding: 0 10px 0 15px; margin-bottom: 4px; }
.card p { flex: 1; white-space: nowrap; line-height: 17px; color: #000; letter-spacing: -.1px; padding-top: 12px; }
.card button { height: 21px; margin: 26px 16px 0 0; padding-bottom: 1px; background: #fff; border: 1px solid #c2cfc1; border-bottom-color: #a9b5a8; border-radius: 4px; flex: none; letter-spacing: -.1px; }
.card.c1 { margin-bottom: 3px; padding-right: 11px; }
.card.c1 p { padding-top: 19px; letter-spacing: -.06px; }
.card.c1 button { margin-right: 15px; }
.card.c2 { height: 76px; margin-bottom: 78px; }
.card.c2 p { padding-top: 16px; letter-spacing: -.13px; }
.card.c4 { margin-bottom: 58px; }
.card.c4 p { letter-spacing: -.12px; }
.card.c4 button { margin-right: 17px; }
.card.c5 p { padding-top: 19px; }
.card.c6 p { letter-spacing: -.08px; }
.w90 { width: 90px; }
.w195 { width: 195px; }
.w93 { width: 93px; }
.w105 { width: 105px; }
.w116 { width: 116px; }
.q { width: 19px; height: 19px; margin-top: 29px; border-radius: 50%; background: #fff; box-shadow: 0 0 0 .5px #aebbad, 0 1px 1px rgba(0,0,0,.25); text-align: center; line-height: 19px; font-size: 12.500px; font-weight: 600; flex: none; }
.c3 .q, .c4 .q { margin-top: 28px; }

/* dock */
.dock { position: absolute; left: 50px; top: 743px; width: 1172px; height: 50px; background: #cdcdcd; border-radius: 5px 5px 0 0; display: flex; padding-left: 2.500px; }
.dk { width: 41px; height: 50px; position: relative; flex: none; }
.dk > svg { width: 41px; height: 50px; display: block; overflow: visible; }
.petals ellipse { mix-blend-mode: multiply; opacity: .92; }
.run::after { content: ""; position: absolute; left: 18.500px; top: 44px; width: 4px; height: 4px; border-radius: 50%; background: #4c4c4c; }
.led { font: bold 11px "DejaVu Sans Mono", monospace; fill: #e8b41e; }
.sep { width: 1px; height: 36px; background: #a9a9a9; margin: 7px 8px 0 10px; }
.cursor { position: absolute; left: 154px; top: 100px; }
```
